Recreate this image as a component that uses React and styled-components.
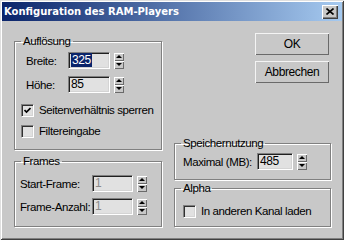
import styled, { createGlobalStyle } from "styled-components";

const GlobalStyle = createGlobalStyle`
  html, body {
    margin: 0;
    padding: 0;
    background: #c8c8c8;
  }
`;

const Window = styled.div`
  width: 344px;
  height: 240px;
  box-sizing: border-box;
  padding: 2px;
  background: #c8c8c8;
  box-shadow: inset 1px 1px 0 #dfdfdf, inset -1px -1px 0 #404040,
    inset 2px 2px 0 #ffffff, inset -2px -2px 0 #808080;
  display: flex;
  flex-direction: column;
  font-family: "Liberation Sans", Arial, sans-serif;
  font-size: 11.5px;
  letter-spacing: -0.4px;
  color: #000;
`;

const TitleBar = styled.div`
  flex: none;
  height: 19px;
  background: linear-gradient(to right, #0a246a, #a6caf0);
  display: flex;
  align-items: center;
  justify-content: space-between;
  padding: 0 4px 0 2px;
`;

const Title = styled.span`
  font-family: "DejaVu Sans", Verdana, sans-serif;
  font-weight: bold;
  font-size: 10px;
  letter-spacing: 0;
  color: #fff;
  white-space: nowrap;
`;

const CloseBtn = styled.div`
  width: 16px;
  height: 14px;
  box-sizing: border-box;
  background: #c8c8c8;
  box-shadow: inset 1px 1px 0 #fff, inset -1px -1px 0 #404040,
    inset -2px -2px 0 #808080;
  display: flex;
  align-items: center;
  justify-content: center;
`;

const Body = styled.div`
  flex: 1;
  display: flex;
  gap: 12px;
  margin-top: 1px;
  padding-left: 12px;
  padding-bottom: 11px;
`;

const LeftCol = styled.div`
  width: 148px;
  padding-top: 12px;
  display: flex;
  flex-direction: column;
  gap: 4px;
`;

const RightCol = styled.div`
  width: 157px;
  padding-top: 11px;
  display: flex;
  flex-direction: column;
`;

const Buttons = styled.div`
  display: flex;
  flex-direction: column;
  align-items: flex-end;
  gap: 6px;
  padding-right: 2px;
`;

const Button = styled.button`
  width: 74px;
  height: 22px;
  padding: 0;
  border: none;
  background: #c8c8c8;
  font: inherit;
  font-size: 12px;
  letter-spacing: inherit;
  color: #000;
  box-shadow: inset 1px 1px 0 #f4f4f4, inset -1px -1px 0 #6a6a6a;
`;

const RightGroups = styled.div`
  margin-top: auto;
  display: flex;
  flex-direction: column;
  gap: 1px;
`;

const Group = styled.fieldset`
  margin: 0;
  min-width: 0;
  padding: ${(p) => p.$pad};
  border: 1px solid #808080;
  box-shadow: 1px 1px 0 #fff, inset 1px 1px 0 #fff;
  display: flex;
  flex-direction: column;
  gap: ${(p) => p.$gap || 0}px;
`;

const Legend = styled.legend`
  margin-left: 6px;
  padding: 0 2px;
  line-height: 14px;
`;

const FieldRow = styled.div`
  display: flex;
  align-items: center;
  height: 17px;
  padding-left: ${(p) => p.$indent}px;
`;

const Label = styled.span`
  flex: none;
  width: ${(p) => p.$w}px;
  white-space: nowrap;
`;

const Edit = styled.div`
  flex: none;
  width: ${(p) => p.$w}px;
  height: 17px;
  box-sizing: border-box;
  background: #e1e1e1;
  border-top: 1px solid #808080;
  border-left: 1px solid #808080;
  border-right: 1px solid #fff;
  border-bottom: 1px solid #fff;
  box-shadow: inset 1px 1px 0 #202020, inset -1px -1px 0 #d4d4d4;
  color: ${(p) => (p.$disabled ? "#8a8a8a" : "#000")};
  padding-left: 2px;
  line-height: 15px;
  font-size: 12px;
  white-space: nowrap;
`;

const Selected = styled.span`
  background: #0a246a;
  color: #fff;
  padding: 0 1px;
`;

const Spinner = styled.div`
  flex: none;
  margin-left: 4px;
  width: 10px;
  height: 16px;
  display: flex;
  flex-direction: column;
`;

const SpinHalf = styled.div`
  flex: 1;
  box-sizing: border-box;
  background: #c8c8c8;
  box-shadow: inset 1px 1px 0 #fff, inset -1px -1px 0 #6a6a6a;
  display: flex;
  align-items: center;
  justify-content: center;
`;

const Arrow = styled.span`
  width: 0;
  height: 0;
  border-left: 3px solid transparent;
  border-right: 3px solid transparent;
  ${(p) =>
    p.$down
      ? "border-top: 3px solid #000;"
      : "border-bottom: 3px solid #000;"}
`;

const CheckRow = styled.div`
  display: flex;
  align-items: center;
  gap: 5px;
  height: 16px;
  padding-left: ${(p) => p.$indent}px;
  white-space: nowrap;
`;

const Box = styled.span`
  flex: none;
  width: 13px;
  height: 13px;
  box-sizing: border-box;
  background: #e1e1e1;
  border-top: 1px solid #808080;
  border-left: 1px solid #808080;
  border-right: 1px solid #fff;
  border-bottom: 1px solid #fff;
  box-shadow: inset 1px 1px 0 #303030, inset -1px -1px 0 #d4d4d4;
  display: flex;
  align-items: center;
  justify-content: center;
`;

function Spin() {
  return (
    <Spinner>
      <SpinHalf>
        <Arrow />
      </SpinHalf>
      <SpinHalf>
        <Arrow $down />
      </SpinHalf>
    </Spinner>
  );
}

function Check({ checked, children, indent }) {
  return (
    <CheckRow $indent={indent}>
      <Box>
        {checked && (
          <svg width="7" height="7" viewBox="0 0 7 7">
            <path d="M0.5 3 L2.5 5 L6.5 1" fill="none" stroke="#000" strokeWidth="1.7" />
          </svg>
        )}
      </Box>
      {children}
    </CheckRow>
  );
}

export default function App() {
  return (
    <>
      <GlobalStyle />
      <Window>
        <TitleBar>
          <Title>Konfiguration des RAM-Players</Title>
          <CloseBtn>
            <svg width="8" height="7" viewBox="0 0 8 7">
              <path d="M0.5 0.5 L7.5 6.5 M7.5 0.5 L0.5 6.5" stroke="#000" strokeWidth="1.6" />
            </svg>
          </CloseBtn>
        </TitleBar>
        <Body>
          <LeftCol>
            <Group $pad="4px 0 10px 0">
              <Legend>Auflösung</Legend>
              <FieldRow $indent={11}>
                <Label $w={42}>Breite:</Label>
                <Edit $w={42}>
                  <Selected>325</Selected>
                </Edit>
                <Spin />
              </FieldRow>
              <FieldRow $indent={11} style={{ marginTop: 7 }}>
                <Label $w={42}>Höhe:</Label>
                <Edit $w={42}>85</Edit>
                <Spin />
              </FieldRow>
              <div style={{ height: 9 }} />
              <Check checked indent={6}>
                Seitenverhältnis sperren
              </Check>
              <div style={{ height: 5 }} />
              <Check indent={6}>Filtereingabe</Check>
            </Group>
            <Group $pad="7px 0 11px 0" $gap={6}>
              <Legend>Frames</Legend>
              <FieldRow $indent={5}>
                <Label $w={72}>Start-Frame:</Label>
                <Edit $w={41} $disabled>
                  1
                </Edit>
                <Spin />
              </FieldRow>
              <FieldRow $indent={5}>
                <Label $w={72}>Frame-Anzahl:</Label>
                <Edit $w={41} $disabled>
                  1
                </Edit>
                <Spin />
              </FieldRow>
            </Group>
          </LeftCol>
          <RightCol>
            <Buttons>
              <Button>OK</Button>
              <Button>Abbrechen</Button>
            </Buttons>
            <RightGroups>
              <Group $pad="3px 0 9px 0">
                <Legend>Speichernutzung</Legend>
                <FieldRow $indent={8}>
                  <Label $w={74}>Maximal (MB):</Label>
                  <Edit $w={36}>485</Edit>
                  <Spin />
                </FieldRow>
              </Group>
              <Group $pad="8px 0 7px 0">
                <Legend>Alpha</Legend>
                <Check indent={8}>In anderen Kanal laden</Check>
              </Group>
            </RightGroups>
          </RightCol>
        </Body>
      </Window>
    </>
  );
}
